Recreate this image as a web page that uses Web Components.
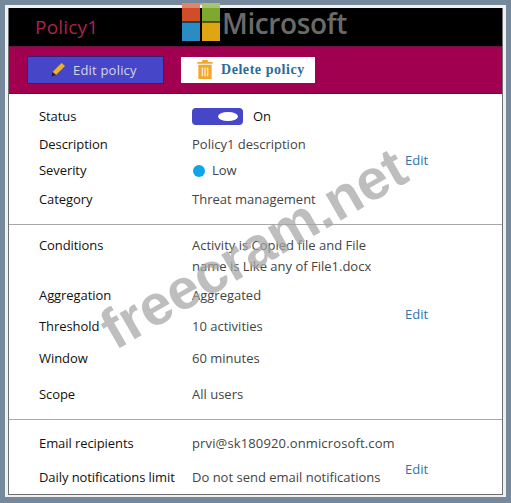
<!DOCTYPE html>
<html>
<head>
<meta charset="utf-8">
<title>Policy1</title>
<style>
    html, body { margin: 0; height: 100%; }
    body { background: #76889b; overflow: hidden; }
</style>
</head>
<body>
<policy-card>
    <policy-header slot="header" name="Policy1"></policy-header>
    <policy-toolbar slot="header"></policy-toolbar>

    <policy-section edit-shift="3px" style="--pad-top:8px;--pad-bottom:9px">
        <policy-row label="Status" style="--h:28px"><policy-toggle>On</policy-toggle></policy-row>
        <policy-row label="Description" style="--h:28px">Policy1 description</policy-row>
        <policy-row label="Severity" style="--h:25px"><policy-severity>Low</policy-severity></policy-row>
        <policy-row label="Category" style="--h:32px">Threat management</policy-row>
    </policy-section>

    <policy-section edit-shift="-18px" style="--pad-top:10px;--pad-bottom:8px">
        <policy-row label="Conditions" style="--h:42px" top>Activity is Copied file and File<br>name is Like any of File1.docx</policy-row>
        <policy-row label="Aggregation" style="--h:36px">Aggregated</policy-row>
        <policy-row label="Threshold" style="--h:26px">10 activities</policy-row>
        <policy-row label="Window" style="--h:38px">60 minutes</policy-row>
        <policy-row label="Scope" style="--h:34px">All users</policy-row>
    </policy-section>

    <policy-section edit-shift="19px" style="--pad-top:5px;--pad-bottom:0px">
        <policy-row label="Email recipients" style="--h:36px;--ls:.14px">prvi@sk180920.onmicrosoft.com</policy-row>
        <policy-row label="Daily notifications limit" style="--h:33px">Do not send email notifications</policy-row>
    </policy-section>

    <policy-watermark slot="overlay">freecram.net</policy-watermark>
</policy-card>

<script>
class PolicyCard extends HTMLElement {
    constructor() {
        super();
        this.attachShadow({ mode: 'open' });
        this.shadowRoot.innerHTML = `
            <style>
                :host {
                    display: block; position: relative; box-sizing: border-box;
                    width: 501px; height: 492px; margin: 5px 0 0 5px;
                    background: #fff;
                    border: solid #eef0f2; border-width: 3px 3px 2px 3px;
                }
                .inner {
                    box-sizing: border-box; height: 100%;
                    border: solid #6f6f6f; border-width: 0 1px 1px 1px;
                    display: flex; flex-direction: column;
                }
            </style>
            <div class="inner">
                <slot name="header"></slot>
                <slot></slot>
            </div>
            <slot name="overlay"></slot>
        `;
    }
}

class PolicyHeader extends HTMLElement {
    constructor() {
        super();
        this.attachShadow({ mode: 'open' });
        this.shadowRoot.innerHTML = `
            <style>
                :host {
                    display: flex; flex: none; align-items: center; position: relative;
                    height: 38px; background: #000; padding-left: 26px;
                }
                .name {
                    font: 19px "Open Sans", sans-serif; color: #a8244f;
                    letter-spacing: .2px;
                }
                .logo {
                    position: absolute; left: 173px; top: -5px;
                    display: flex; align-items: flex-start; gap: 2px;
                }
                .word {
                    font: 600 28px/34px "Open Sans", sans-serif; color: #6a6a6a;
                    margin-top: 3px; letter-spacing: -.4px;
                }
            </style>
            <span class="name"></span>
            <div class="logo">
                <svg width="38" height="38" viewBox="0 0 38 38">
                    <rect width="18" height="18.500" fill="#d24c27"/>
                    <rect x="20" width="18" height="18.500" fill="#7fa92c"/>
                    <rect y="19.500" width="18" height="18.500" fill="#2a8cc2"/>
                    <rect x="20" y="19.500" width="18" height="18.500" fill="#dfa512"/>
                    <rect width="38" height="5" fill="#fff" opacity=".32"/>
                </svg>
                <span class="word">Microsoft</span>
            </div>
        `;
        this.shadowRoot.querySelector('.name').textContent = this.getAttribute('name');
    }
}

class PolicyToolbar extends HTMLElement {
    constructor() {
        super();
        this.attachShadow({ mode: 'open' });
        this.shadowRoot.innerHTML = `
            <style>
                :host {
                    display: flex; flex: none; align-items: center; gap: 17px; box-sizing: border-box;
                    height: 48px; padding: 0 0 1px 18px; background: #a10050;
                    border: solid #6d1040; border-width: 1px 0;
                }
                .btn { display: flex; align-items: center; box-sizing: border-box; white-space: nowrap; }
                .edit {
                    width: 137px; height: 28px; background: #4646c8;
                    border: 1px solid #3a1a7c; padding-left: 23px; gap: 7px;
                    font: 13px "Open Sans", sans-serif; color: #d6d6e6; letter-spacing: .2px;
                }
                .delete {
                    width: 134px; height: 26px; background: #fff;
                    padding-left: 16px; gap: 8px;
                    font: bold 14px "Liberation Serif", serif; color: #2b6a9c; letter-spacing: .55px;
                }
            </style>
            <div class="btn edit">
                <svg width="15" height="15" viewBox="0 0 15 15">
                    <path d="M10.500 1 14 4 5 13 1.500 10z" fill="#eeb02c"/>
                    <path d="M1.500 10 5 13 0.500 14.500z" fill="#222"/>
                </svg>
                <span>Edit policy</span>
            </div>
            <div class="btn delete">
                <svg width="16" height="19" viewBox="0 0 16 20">
                    <path d="M5 0h6v2h5v2H0V2h5z" fill="#f4a62a"/>
                    <path d="M1 5h14v15H1z" fill="#f4a62a"/>
                    <path d="M4.500 8h1.500v9H4.500zM7.300 8h1.500v9H7.300zM10 8h1.500v9H10z" fill="#fff" opacity=".75"/>
                </svg>
                <span>Delete policy</span>
            </div>
        `;
    }
}

class PolicySection extends HTMLElement {
    constructor() {
        super();
        this.attachShadow({ mode: 'open' });
        this.shadowRoot.innerHTML = `
            <style>
                :host {
                    display: flex; flex: none; align-items: center; box-sizing: border-box;
                    padding: var(--pad-top, 8px) 0 var(--pad-bottom, 8px) 30px;
                    border-bottom: 1px solid #a9a9a9;
                }
                :host(:last-of-type) { border-bottom: 0; }
                .rows { width: 366px; flex: none; }
                .edit {
                    color: #2a76ad;
                    font: 13px "Open Sans", sans-serif;
                }
            </style>
            <div class="rows"><slot></slot></div>
            <span class="edit">Edit</span>
        `;
        this.shadowRoot.querySelector('.edit').style.marginTop = this.getAttribute('edit-shift') || '0';
    }
}

class PolicyRow extends HTMLElement {
    constructor() {
        super();
        this.attachShadow({ mode: 'open' });
        this.shadowRoot.innerHTML = `
            <style>
                :host {
                    display: grid; grid-template-columns: 153px 1fr; align-items: center;
                    height: var(--h, 28px);
                    font: 13px/21px "Open Sans", sans-serif; color: #444; letter-spacing: var(--ls, 0);
                }
                :host([top]) { align-items: start; }
                .label { color: #111; font-weight: 500; letter-spacing: -.08px; white-space: nowrap; }
            </style>
            <span class="label"></span>
            <div><slot></slot></div>
        `;
        this.shadowRoot.querySelector('.label').textContent = this.getAttribute('label');
    }
}

class PolicyToggle extends HTMLElement {
    constructor() {
        super();
        this.attachShadow({ mode: 'open' });
        this.shadowRoot.innerHTML = `
            <style>
                :host { display: flex; align-items: center; gap: 10px; color: #111; }
                .track {
                    box-sizing: border-box; width: 51px; height: 17px; padding-right: 5px;
                    background: #4646c8; border-radius: 4px;
                    display: flex; align-items: center; justify-content: flex-end;
                }
                .knob { width: 20px; height: 9px; border-radius: 50%; background: #fff; }
            </style>
            <div class="track"><div class="knob"></div></div>
            <span><slot></slot></span>
        `;
    }
}

class PolicySeverity extends HTMLElement {
    constructor() {
        super();
        this.attachShadow({ mode: 'open' });
        this.shadowRoot.innerHTML = `
            <style>
                :host { display: flex; align-items: center; gap: 7px; padding-left: 1px; }
                .dot { width: 12px; height: 12px; border-radius: 50%; background: #0ea5e9; }
            </style>
            <div class="dot"></div>
            <span><slot></slot></span>
        `;
    }
}

class PolicyWatermark extends HTMLElement {
    constructor() {
        super();
        this.attachShadow({ mode: 'open' });
        this.shadowRoot.innerHTML = `
            <style>
                :host {
                    position: absolute; left: 0; right: 0; top: 0; bottom: 0;
                    display: flex; align-items: center; justify-content: center;
                    pointer-events: none; overflow: hidden;
                }
                span {
                    font: bold 57px "Liberation Sans", sans-serif; color: rgba(165,165,165,.72);
                    transform: translate(-2px, -4px) rotate(-30deg); white-space: nowrap;
                }
            </style>
            <span><slot></slot></span>
        `;
    }
}

customElements.define('policy-card', PolicyCard);
customElements.define('policy-header', PolicyHeader);
customElements.define('policy-toolbar', PolicyToolbar);
customElements.define('policy-section', PolicySection);
customElements.define('policy-row', PolicyRow);
customElements.define('policy-toggle', PolicyToggle);
customElements.define('policy-severity', PolicySeverity);
customElements.define('policy-watermark', PolicyWatermark);
</script>
</body>
</html>
